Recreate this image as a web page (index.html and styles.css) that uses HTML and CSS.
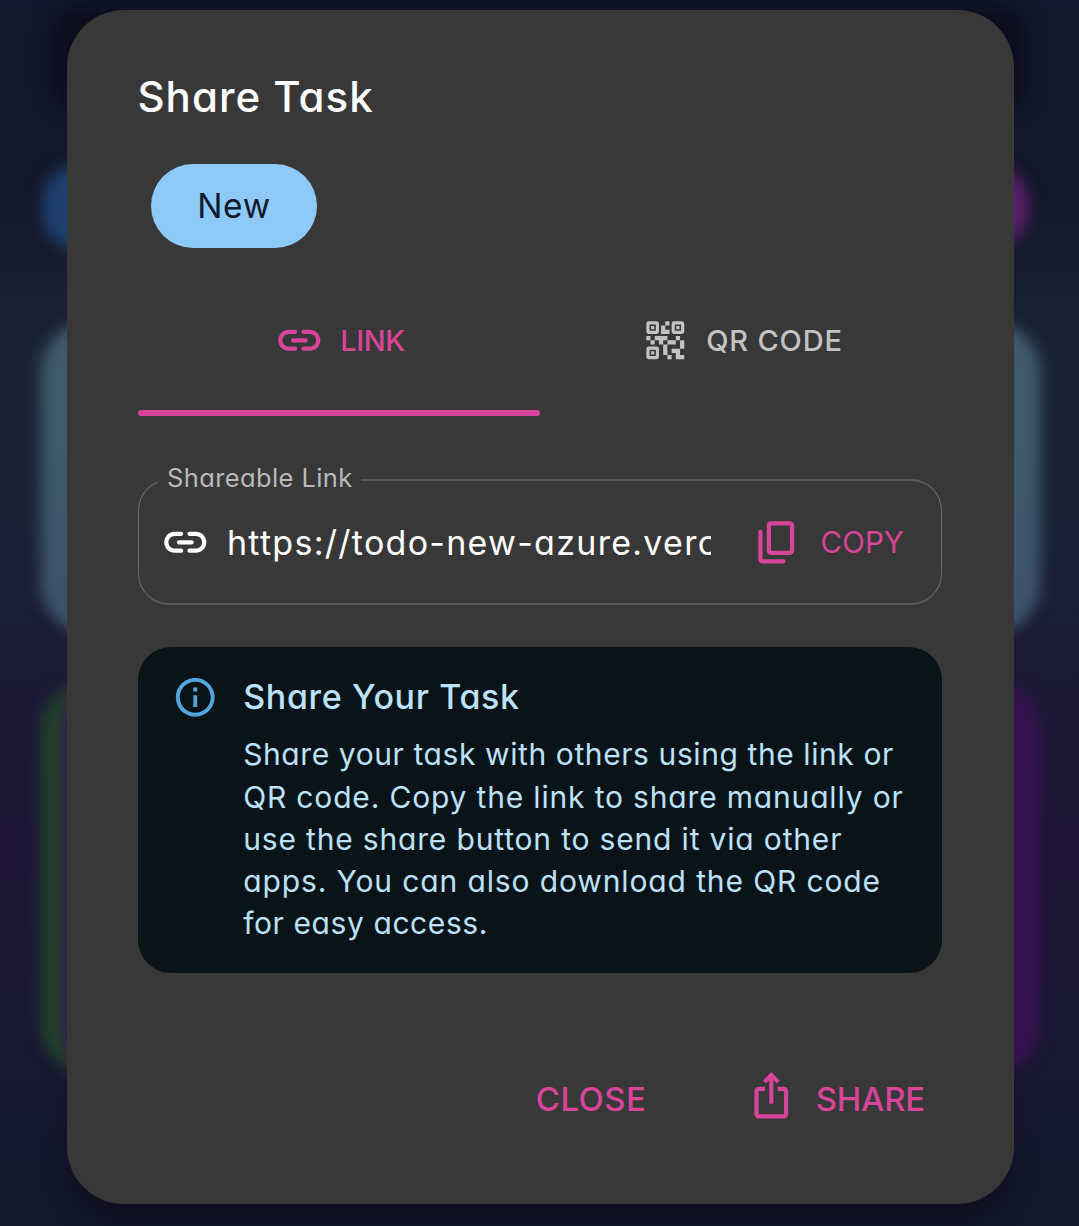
FILE: index.html
```
<!DOCTYPE html>
<html lang="en">
<head>
<meta charset="utf-8">
<title>Share Task</title>
<link rel="stylesheet" href="styles.css">
</head>
<body>
<div class="backdrop" aria-hidden="true">
  <div class="blob blob-header"></div>
  <div class="blob blob-footer"></div>
  <div class="blob blob-blue"></div>
  <div class="blob blob-magenta"></div>
  <div class="blob blob-card"></div>
  <div class="blob blob-task"></div>
</div>
<main class="dialog" role="dialog" aria-labelledby="title">
  <h1 class="title" id="title">Share Task</h1>
  <div class="chip">New</div>

  <div class="tabs" role="tablist">
    <div class="tab active" role="tab">
      <svg class="icon" viewBox="0 0 24 24"><path d="M17 7h-3c-.55 0-1 .45-1 1s.45 1 1 1h3c1.65 0 3 1.35 3 3s-1.35 3-3 3h-3c-.55 0-1 .45-1 1s.45 1 1 1h3c2.76 0 5-2.24 5-5s-2.24-5-5-5zm-9 5c0 .55.45 1 1 1h6c.55 0 1-.45 1-1s-.45-1-1-1H9c-.55 0-1 .45-1 1zm2 3H7c-1.65 0-3-1.35-3-3s1.35-3 3-3h3c.55 0 1-.45 1-1s-.45-1-1-1H7c-2.76 0-5 2.24-5 5s2.24 5 5 5h3c.55 0 1-.45 1-1s-.45-1-1-1z"/></svg>
      <span class="tab-link">LINK</span>
    </div>
    <div class="tab" role="tab">
      <svg class="icon" viewBox="0 0 24 24">
        <g fill="none" stroke="currentColor" stroke-width="1.5"><rect x="3.75" y="3.75" width="4.5" height="4.5" rx=".4"/><rect x="15.75" y="3.75" width="4.5" height="4.5" rx=".4"/><rect x="3.75" y="15.75" width="4.5" height="4.5" rx=".4"/></g>
        <path d="M15 21h-2v-2h2v2zm-2-7h-2v5h2v-5zm8-2h-2v4h2v-4zm-2-2h-2v2h2v-2zM7 12H5v2h2v-2zm-2-2H3v2h2v-2zm7-5h2V3h-2v2zM19 19v-3h-4v2h2v3h4v-2h-2zm-2-7h-4v2h4v-2zm-4-2H7v2h2v2h2v-2h2v-2zm1-1V7h-2V5h-2v4h4zM6.75 5.25h-1.5v1.5h1.5v-1.5zm0 12h-1.5v1.5h1.5v-1.5zm12-12h-1.5v1.5h1.5v-1.5z"/>
      </svg>
      <span class="tab-qr">QR CODE</span>
    </div>
  </div>

  <div class="field">
    <span class="field-label">Shareable Link</span>
    <svg class="icon" viewBox="0 0 24 24"><path d="M17 7h-3c-.55 0-1 .45-1 1s.45 1 1 1h3c1.65 0 3 1.35 3 3s-1.35 3-3 3h-3c-.55 0-1 .45-1 1s.45 1 1 1h3c2.76 0 5-2.24 5-5s-2.24-5-5-5zm-9 5c0 .55.45 1 1 1h6c.55 0 1-.45 1-1s-.45-1-1-1H9c-.55 0-1 .45-1 1zm2 3H7c-1.65 0-3-1.35-3-3s1.35-3 3-3h3c.55 0 1-.45 1-1s-.45-1-1-1H7c-2.76 0-5 2.24-5 5s2.24 5 5 5h3c.55 0 1-.45 1-1s-.45-1-1-1z"/></svg>
    <input class="url" type="text" readonly aria-label="Shareable Link" value="https://todo-new-azure.vercel.app">
    <div class="copy">
      <svg class="icon" viewBox="0 0 24 24"><g fill="none" stroke="currentColor" stroke-width="2" stroke-linecap="round"><rect x="8" y="3" width="11" height="14" rx="1"/><path d="M4 7v13c0 .55.45 1 1 1h10"/></g></svg>
      <span>COPY</span>
    </div>
  </div>

  <section class="alert">
    <svg class="info" viewBox="0 0 24 24"><path d="M11 7h2v2h-2zm0 4h2v6h-2zm1-9C6.48 2 2 6.48 2 12s4.48 10 10 10 10-4.48 10-10S17.52 2 12 2zm0 18c-4.41 0-8-3.59-8-8s3.59-8 8-8 8 3.59 8 8-3.59 8-8 8z"/></svg>
    <div class="message">
      <h2 class="alert-title">Share Your Task</h2>
      <p class="alert-text">
        <span class="line snug">Share your task with others using the link or</span>
        <span class="line">QR code. Copy the link to share manually or</span>
        <span class="line">use the share button to send it via other</span>
        <span class="line loose">apps. You can also download the QR code</span>
        <span class="line snug">for easy access.</span>
      </p>
    </div>
  </section>

  <footer class="actions">
    <span class="close">CLOSE</span>
    <div class="share">
      <svg class="icon share-icon" viewBox="0 0 24 24"><path d="M16 5l-1.42 1.42-1.59-1.59V16h-1.98V4.83L9.42 6.42 8 5l4-4 4 4zm4 5v11c0 1.1-.9 2-2 2H6c-1.11 0-2-.9-2-2V10c0-1.11.89-2 2-2h3v2H6v11h12V10h-3V8h3c1.1 0 2 .89 2 2z"/></svg>
      <span>SHARE</span>
    </div>
  </footer>
</main>
</body>
</html>
```
FILE: styles.css
```
* { box-sizing: border-box; }

body {
  margin: 0;
  height: 1226px;
  overflow: hidden;
  font-family: Inter, sans-serif;
  font-feature-settings: "cv11";
  background: #12172a;
}

/* Blurred app behind the dialog */
.backdrop {
  position: absolute;
  inset: 0;
  overflow: hidden;
  background: linear-gradient(#12172b 0, #13172a 200px, #1a2434 350px, #1a2436 520px, #1c1a36 660px, #1d1536 850px, #191733 1020px, #12172a 1180px);
}
.blob { position: absolute; filter: blur(7px); }
.blob-header { left: 52px; top: 6px; width: 974px; height: 104px; border-radius: 30px; background: #0c0d1e; filter: blur(9px); }
.blob-footer { left: 72px; top: 1060px; width: 936px; height: 160px; border-radius: 60px; background: #0f0d1e; filter: blur(12px); }
.blob-blue { left: 42px; top: 165px; width: 160px; height: 84px; border-radius: 36px; background: #1e3f6f; }
.blob-magenta { left: 880px; top: 166px; width: 148px; height: 82px; border-radius: 36px; background: #5a1f6c; }
.blob-card { left: 41px; top: 321px; width: 999px; height: 314px; border-radius: 52px; background: linear-gradient(#405a6d, #3e5a6c 40%, #3d526c); }
.blob-task { left: 41px; top: 680px; width: 999px; height: 396px; border-radius: 52px; border-left: 22px solid #21422b; background: linear-gradient(90deg, #35184f, #36134f); }

.dialog {
  position: relative;
  display: flex;
  flex-direction: column;
  width: 947px;
  height: 1194px;
  margin: 10px 0 0 67px;
  padding: 57px 71.6px 0 71.4px;
  border-radius: 57px;
  background: #383838;
  color: #fff;
}

.title { margin: 0; font-size: 42px; font-weight: 500; line-height: 60px; letter-spacing: 1.05px; text-indent: -1px; }

.chip {
  width: 166px;
  height: 84px;
  margin: 37px 0 0 12.6px;
  border-radius: 42px;
  background: #8ecaf7;
  color: #111a2e;
  font-size: 33.5px;
  line-height: 84px;
  letter-spacing: .7px;
  text-align: center;
}

.icon { flex: none; width: 50.6px; height: 50.6px; fill: currentColor; }

.tabs { display: flex; height: 152px; margin-top: 16px; }
.tab {
  position: relative;
  flex: 1;
  display: flex;
  align-items: center;
  justify-content: center;
  gap: 15.5px;
  color: #c3c3c3;
  font-size: 29.5px;
  font-weight: 500;
}
.tab.active { color: #d64599; }
.tab.active::after { content: ""; position: absolute; inset: auto 0 0 0; height: 6.5px; border-radius: 3px; background: currentColor; }
.tab-link { font-size: 29px; letter-spacing: -.4px; }
.tab-qr { font-size: 29px; letter-spacing: .84px; }

.field {
  position: relative;
  display: flex;
  align-items: center;
  height: 126px;
  margin-top: 63px;
  padding-left: 20.5px;
  border: 1px solid #696969;
  border-width: 2px 1px;
  border-top-color: #5a5a5a;
  border-bottom-color: #5a5a5a;
  border-radius: 31px;
}
.field-label {
  position: absolute;
  left: 18px;
  top: -20px;
  padding: 0 8.5px 0 9.5px;
  background: #383838;
  color: #b9b9b9;
  font-size: 25.5px;
  line-height: 34px;
  letter-spacing: .4px;
}
.url {
  width: 484.5px;
  height: 48px;
  margin: 0 0 0 16.5px;
  padding: 0;
  border: 0;
  outline: 0;
  background: none;
  color: #fff;
  font: inherit;
  font-feature-settings: inherit;
  font-size: 34px;
  letter-spacing: 1.28px;
}
.copy { display: flex; align-items: center; gap: 17.5px; margin-left: 41px; color: #d64599; font-size: 29.5px; letter-spacing: .1px; }

.alert {
  display: flex;
  gap: 25px;
  height: 326px;
  margin-top: 42px;
  padding: 25px 0 0 33.3px;
  border-radius: 33px;
  background: #0a1318;
  color: #bbe2f8;
}
.info { flex: none; width: 46.5px; height: 46.5px; margin-top: 2px; fill: #52a5df; }
.alert-title { margin: 0; font-size: 34px; font-weight: 500; line-height: 50px; letter-spacing: .65px; }
.alert-text { margin: 11.4px 0 0; font-size: 30px; line-height: 42.2px; }
.line { display: block; white-space: nowrap; letter-spacing: .83px; }
.line.snug { letter-spacing: .59px; }
.line.loose { letter-spacing: .88px; }

.actions { display: flex; align-items: center; justify-content: flex-end; gap: 100px; height: 60px; margin-top: 96px; padding-right: 17.5px; color: #d64599; font-size: 33px; font-weight: 500; }
.close { letter-spacing: .4px; }
.share { display: flex; align-items: center; gap: 19px; letter-spacing: -.3px; }
.share-icon { margin-top: -7px; }
```
